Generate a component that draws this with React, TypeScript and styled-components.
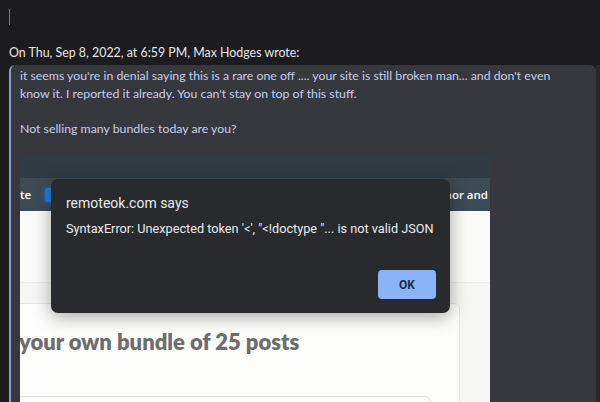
import React from "react";
import styled, { createGlobalStyle } from "styled-components";

const Global = createGlobalStyle`
  html, body { margin: 0; padding: 0; background: #1c1c1e; }
  body { width: 600px; height: 402px; overflow: hidden; position: relative; }
`;

const Page = styled.div`
  padding-left: 9px;
  font-family: "Lato", "Open Sans", sans-serif;
`;

const Cursor = styled.div`
  margin-top: 9px;
  width: 1px;
  height: 16px;
  background: #7a7a7c;
`;

const Attribution = styled.div`
  margin-top: 19px;
  font-size: 12.4px;
  line-height: 18px;
  color: #e6e6e8;
`;

const QuoteRow = styled.div`
  display: flex;
  margin-top: 3px;
`;

const Quote = styled.div`
  flex: 1;
  background: #37383d;
  border-left: 2px solid #8e9cc6;
  border-radius: 6px 6px 0 0;
  padding: 2px 0 0 9px;
  height: 340px;
`;

const Track = styled.div`
  width: 4px;
  background: #28292c;
`;

const Para = styled.p`
  margin: 0 0 17.7px;
  font-size: 12.3px;
  line-height: 17.7px;
  color: #c6cdf0;
  white-space: nowrap;
`;

const Shot = styled.div`
  margin-top: 17px;
  width: 470px;
  height: 260px;
  overflow: hidden;
  font-family: "Open Sans", sans-serif;
`;

const TopBand = styled.div`
  height: 23px;
  background: #303b43;
`;

const NavBand = styled.div`
  height: 33px;
  background: #3d4b55;
  display: flex;
  align-items: center;
  padding-right: 2px;
  color: #ffffff;
  font-size: 11.5px;
  font-weight: 600;
`;

const NavLeft = styled.div`
  display: flex;
  align-items: center;
  gap: 14px;
  flex: 1;
`;

const NavIcon = styled.div`
  width: 10px;
  height: 14px;
  border-radius: 3px;
  background: #1e7fe0;
  box-shadow: 0 0 6px rgba(40, 140, 255, 0.7);
`;

const Content = styled.div`
  background: #fafaf8;
  padding-top: 71px;
`;

const Section = styled.div`
  border-top: 1px solid #ebebe9;
  background: #f6f6f4;
  padding-top: 20px;
  padding-bottom: 40px;
`;

const Card = styled.div`
  margin-left: -30px;
  width: 470px;
  background: #fdfdfb;
  border: 1px solid #e6e6e4;
  border-radius: 6px;
  padding: 24px 0 40px 26px;
  box-sizing: border-box;
`;

const Heading = styled.div`
  font-family: "Lato", "Open Sans", sans-serif;
  font-weight: 800;
  font-size: 22px;
  line-height: 28px;
  color: #6d6d6d;
  white-space: nowrap;
  padding-left: 2px;
`;

const InputBox = styled.div`
  margin-top: 40px;
  width: 412px;
  height: 40px;
  border: 1px solid #dddddb;
  border-radius: 6px;
  background: #ffffff;
`;

const Dialog = styled.div`
  position: absolute;
  left: 51px;
  top: 179px;
  width: 399px;
  height: 134px;
  box-sizing: border-box;
  background: #292a2d;
  border-radius: 7px;
  box-shadow: 0 4px 18px rgba(0, 0, 0, 0.35);
  padding: 14px 14px 0 15px;
  font-family: "Roboto", "Liberation Sans", sans-serif;
  color: #e8eaed;
`;

const DialogTitle = styled.div`
  font-size: 14px;
  line-height: 20px;
`;

const DialogMessage = styled.div`
  margin-top: 8px;
  font-size: 12.7px;
  line-height: 16px;
  white-space: nowrap;
`;

const ButtonRow = styled.div`
  display: flex;
  justify-content: flex-end;
  margin-top: 33px;
`;

const OkButton = styled.button`
  width: 58px;
  height: 29px;
  border: none;
  border-radius: 4px;
  background: #8ab4f8;
  color: #1f2a44;
  font-family: "Roboto", "Liberation Sans", sans-serif;
  font-size: 12px;
  font-weight: 700;
  padding: 0;
`;

export default function App() {
  return (
    <>
      <Global />
      <Page>
        <Cursor />
        <Attribution>On Thu, Sep 8, 2022, at 6:59 PM, Max Hodges wrote:</Attribution>
        <QuoteRow>
          <Quote>
            <Para>
              it seems you're in denial saying this is a rare one off .... your site is still broken man... and don't even
              <br />
              know it. I reported it already. You can't stay on top of this stuff.
            </Para>
            <Para>Not selling many bundles today are you?</Para>
            <Shot>
              <TopBand />
              <NavBand>
                <NavLeft>
                  <span>te</span>
                  <NavIcon />
                </NavLeft>
                <span>hor and</span>
              </NavBand>
              <Content>
                <Section>
                  <Card>
                    <Heading>your own bundle of 25 posts</Heading>
                    <InputBox />
                  </Card>
                </Section>
              </Content>
            </Shot>
          </Quote>
          <Track />
        </QuoteRow>
      </Page>
      <Dialog>
        <DialogTitle>remoteok.com says</DialogTitle>
        <DialogMessage>SyntaxError: Unexpected token '&lt;', "&lt;!doctype "... is not valid JSON</DialogMessage>
        <ButtonRow>
          <OkButton>OK</OkButton>
        </ButtonRow>
      </Dialog>
    </>
  );
}
